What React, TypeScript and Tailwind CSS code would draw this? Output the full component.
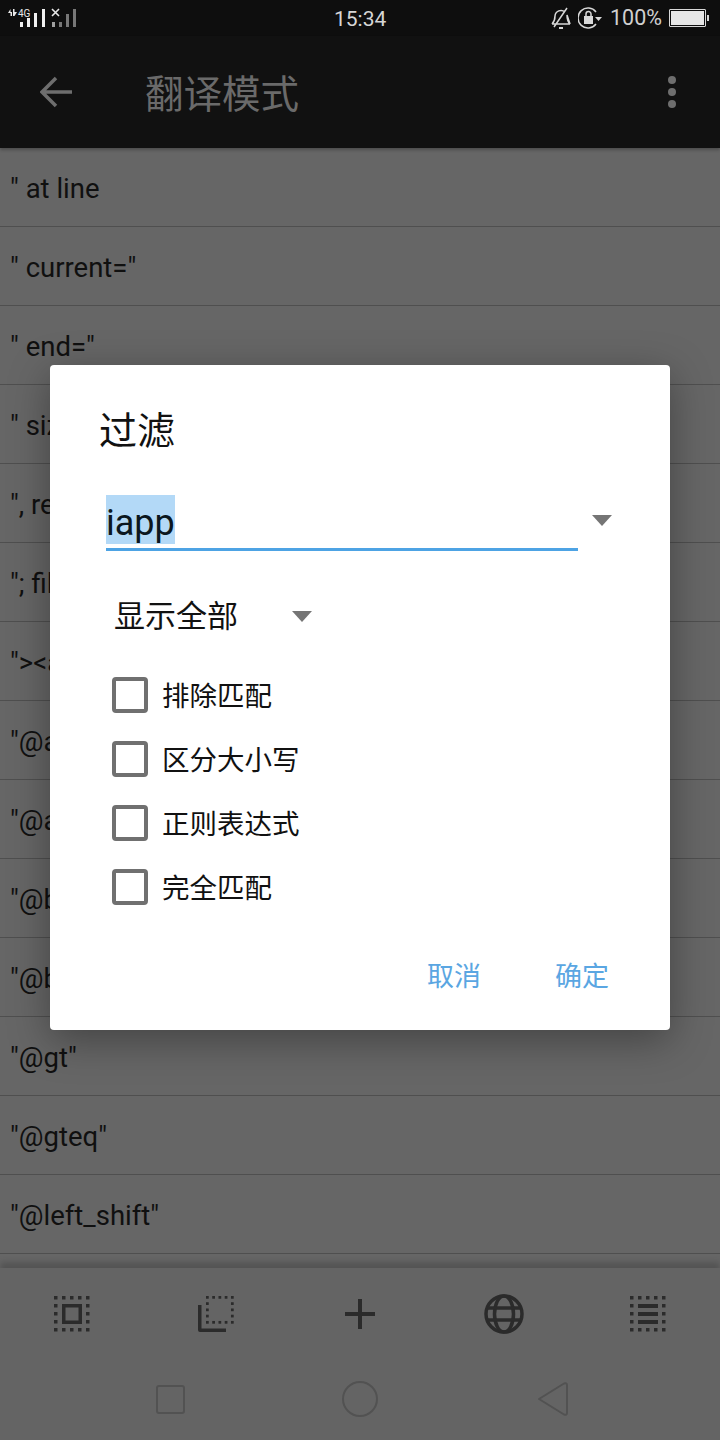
import React from 'react';

const FONT = "font-['Roboto','Noto_Sans_CJK_SC',sans-serif]";

// visible part of the list behind the dialog
const rows = [
  '" at line',
  '" current="',
  '" end="',
  '" size="',
  '", result',
  '"; file',
  '"><a',
  '"@array',
  '"@and',
  '"@bit',
  '"@bool',
  '"@gt"',
  '"@gteq"',
  '"@left_shift"',
];

const checks = ['排除匹配', '区分大小写', '正则表达式', '完全匹配'];

// square of dots, shared by the three selection icons
const DottedBox = () => {
  const steps = [0, 8, 16, 24, 32];
  return (
    <>
      {steps.map((s) => (
        <rect key={`t${s}`} x={s} y={0} width={3.5} height={3.5} />
      ))}
      {steps.map((s) => (
        <rect key={`b${s}`} x={s} y={32} width={3.5} height={3.5} />
      ))}
      {steps.slice(1, 4).map((s) => (
        <rect key={`l${s}`} x={0} y={s} width={3.5} height={3.5} />
      ))}
      {steps.slice(1, 4).map((s) => (
        <rect key={`r${s}`} x={32} y={s} width={3.5} height={3.5} />
      ))}
    </>
  );
};

const SelectAllIcon = () => (
  <svg width="36" height="36" viewBox="0 0 36 36" fill="#2b2b2b">
    <DottedBox />
    <path d="M8 8h20v20H8z M11.500 11.500v13h13v-13z" fillRule="evenodd" />
  </svg>
);

const CopyRegionIcon = () => (
  <svg width="36" height="36" viewBox="0 0 36 36" fill="#2b2b2b">
    <g transform="translate(8 0) scale(0.78)">
      <DottedBox />
    </g>
    <path d="M0 9h3.500v23.500H28V36H2a2 2 0 0 1-2-2z" />
  </svg>
);

const ListBoxIcon = () => (
  <svg width="36" height="36" viewBox="0 0 36 36" fill="#2b2b2b">
    <DottedBox />
    <rect x="8" y="8" width="20" height="4" />
    <rect x="8" y="16" width="20" height="4" />
    <rect x="8" y="24" width="20" height="4" />
  </svg>
);

const GlobeIcon = () => (
  <svg width="40" height="40" viewBox="0 0 40 40" fill="none" stroke="#2b2b2b" strokeWidth="3.500">
    <circle cx="20" cy="20" r="18" />
    <ellipse cx="20" cy="20" rx="9.500" ry="18" />
    <path d="M3.500 14h33M3.500 26h33" />
  </svg>
);

const Caret: React.FC<{ className?: string }> = ({ className }) => (
  <svg width="20" height="11" viewBox="0 0 20 11" className={className} fill="#757575">
    <path d="M0 0h20L10 11z" />
  </svg>
);

const StatusBar = () => (
  <div className="relative flex h-9 shrink-0 items-center justify-between bg-[#0e0e0e] pl-2 pr-[11px]">
    <svg width="70" height="20" viewBox="0 0 70 20">
      <path d="M0 5l2.500-4v3H4v4H2.500V5zM5 1h1.500v3L9 4 6.500 8H5z" fill="#e8e8e8" />
      <text x="10" y="8.500" fontSize="10" fill="#e8e8e8" fontFamily="Roboto">4G</text>
      <rect x="12" y="14" width="3" height="5" fill="#f0f0f0" />
      <rect x="19" y="10" width="3" height="9" fill="#f0f0f0" />
      <rect x="26" y="5" width="3" height="14" fill="#f0f0f0" />
      <rect x="34" y="1" width="3" height="18" fill="#f0f0f0" />
      <path d="M44 1l7 7M51 1l-7 7" stroke="#e8e8e8" strokeWidth="1.600" />
      <rect x="44" y="14" width="3" height="5" fill="#a0a0a0" />
      <rect x="51" y="14" width="3" height="5" fill="#777" />
      <rect x="58" y="6" width="3" height="13" fill="#777" />
      <rect x="65" y="1" width="3" height="18" fill="#777" />
    </svg>
    <span className="absolute left-[334px] top-[6px] text-[21px] leading-[26px] text-[#d6d6d6]">15:34</span>
    <div className="flex items-center">
      <svg width="20" height="22" viewBox="0 0 20 22" fill="none" stroke="#d8d8d8" strokeWidth="1.500">
        <path d="M1 17c2-2 3-4 3-8a6 6 0 0 1 10-4M16 8c0 4 1 7 3 9zM1 17h18M3 20L16 1" />
        <path d="M8 21h4" strokeWidth="2" />
      </svg>
      <svg width="26" height="22" viewBox="0 0 26 22" fill="none" className="ml-[7px]">
        <path d="M18 5a10 10 0 1 0 0 12" stroke="#d8d8d8" strokeWidth="1.500" />
        <path d="M17 10h7l-3.500 4z" fill="#d8d8d8" />
        <rect x="6" y="9" width="9" height="8" fill="#d8d8d8" />
        <path d="M8 9V7a2.500 2.500 0 0 1 5 0v2" stroke="#d8d8d8" strokeWidth="1.500" />
      </svg>
      <span className="ml-[6px] text-[21.500px] leading-[26px] text-[#d0d0d0]">100%</span>
      <div className="ml-[7px] flex items-center">
        <div className="h-[18px] w-[37px] rounded-[1px] border border-[#d8d8d8] p-px">
          <div className="h-full w-full bg-[#e6e6e6]" />
        </div>
        <div className="ml-[1px] h-[6px] w-[2px] bg-[#d8d8d8]" />
      </div>
    </div>
  </div>
);

const Toolbar = () => (
  <div className="relative flex h-[112px] shrink-0 items-center bg-[#111111] shadow-[0_2px_3px_rgba(0,0,0,0.25)]">
    <svg width="34" height="32" viewBox="0 0 34 32" fill="none" stroke="#6e6e6e" strokeWidth="3.500" className="ml-[40px]">
      <path d="M32 16H3M16 2L2 16l14 14" />
    </svg>
    <span className="ml-[71px] mt-[6px] text-[38.500px] leading-[44px] text-[#6a6a6a]">翻译模式</span>
    <div className="ml-auto mr-[44px] flex flex-col gap-[4px]">
      <div className="h-2 w-2 rounded-full bg-[#6e6e6e]" />
      <div className="h-2 w-2 rounded-full bg-[#6e6e6e]" />
      <div className="h-2 w-2 rounded-full bg-[#6e6e6e]" />
    </div>
  </div>
);

const Dialog = () => (
  <div className="absolute left-[50px] top-[365px] flex h-[665px] w-[620px] flex-col rounded-[4px] bg-white shadow-[0_10px_40px_rgba(0,0,0,0.35)]">
    <h2 className="ml-[49px] mt-[40px] text-[38px] leading-[52px] text-[#111111]">过滤</h2>
    <div className="ml-[56px] mr-[58px] mt-[38px] flex items-start">
      <div className="w-[472px] border-b-[3px] border-[#4da3e4] pb-[4px]">
        <span className="inline-block h-[49px] bg-[#b3d9f7] text-[36px] leading-[56px] text-[#0b1720]">iapp</span>
      </div>
      <Caret className="ml-[14px] mt-[20px]" />
    </div>
    <div className="ml-[64px] mt-[42px] flex items-center">
      <span className="pt-[2px] text-[31px] leading-[44px] text-[#111111]">显示全部</span>
      <Caret className="ml-[54px]" />
    </div>
    <div className="ml-[62px] mt-[38px] flex flex-col gap-[28px]">
      {checks.map((label) => (
        <label key={label} className="flex h-9 items-center">
          <span className="h-9 w-9 rounded-[4px] border-[4px] border-[#707070]" />
          <span className="ml-[14px] pt-[4px] text-[27.500px] leading-9 text-[#111111]">{label}</span>
        </label>
      ))}
    </div>
    <div className="mr-[61px] mt-auto mb-[35px] flex justify-end gap-[74px] text-[27px] leading-9 text-[#5aa6e2]">
      <span>取消</span>
      <span>确定</span>
    </div>
  </div>
);

const App: React.FC = () => {
  return (
    <div className={`relative flex h-[1440px] w-[720px] flex-col overflow-hidden bg-[#666666] ${FONT}`}>
      <StatusBar />
      <Toolbar />
      <div className="min-h-0 flex-1 overflow-hidden">
        {rows.map((text) => (
          <div key={text} className="flex h-[79px] items-center border-b border-[#4f4f4f] pt-[4px] pl-[10px] text-[27.500px] text-[#101010]">
            {text}
          </div>
        ))}
      </div>
      <div className="relative flex h-[172px] shrink-0 flex-col bg-[#646464] shadow-[0_-6px_6px_rgba(0,0,0,0.18)]">
        <div className="mt-[26px] grid h-10 grid-cols-5 items-center justify-items-center">
          <SelectAllIcon />
          <CopyRegionIcon />
          <svg width="30" height="30" viewBox="0 0 30 30" fill="#2b2b2b">
            <path d="M13 0h4v13h13v4H17v13h-4V17H0v-4h13z" />
          </svg>
          <GlobeIcon />
          <ListBoxIcon />
        </div>
        <div className="ml-[4px] mt-[47px] flex items-center justify-center">
          <div className="h-[29px] w-[29px] rounded-[3px] border-2 border-[#525252]" />
          <div className="ml-[157px] h-[36px] w-[36px] rounded-full border-2 border-[#525252]" />
          <svg width="32" height="34" viewBox="0 0 32 34" fill="none" stroke="#525252" strokeWidth="2" className="ml-[159px]">
            <path d="M2 17L27 1.500q3-1 3 1.500v28q0 2.500-3 1.500z" strokeLinejoin="round" />
          </svg>
        </div>
      </div>
      <Dialog />
    </div>
  );
};

export default App;
